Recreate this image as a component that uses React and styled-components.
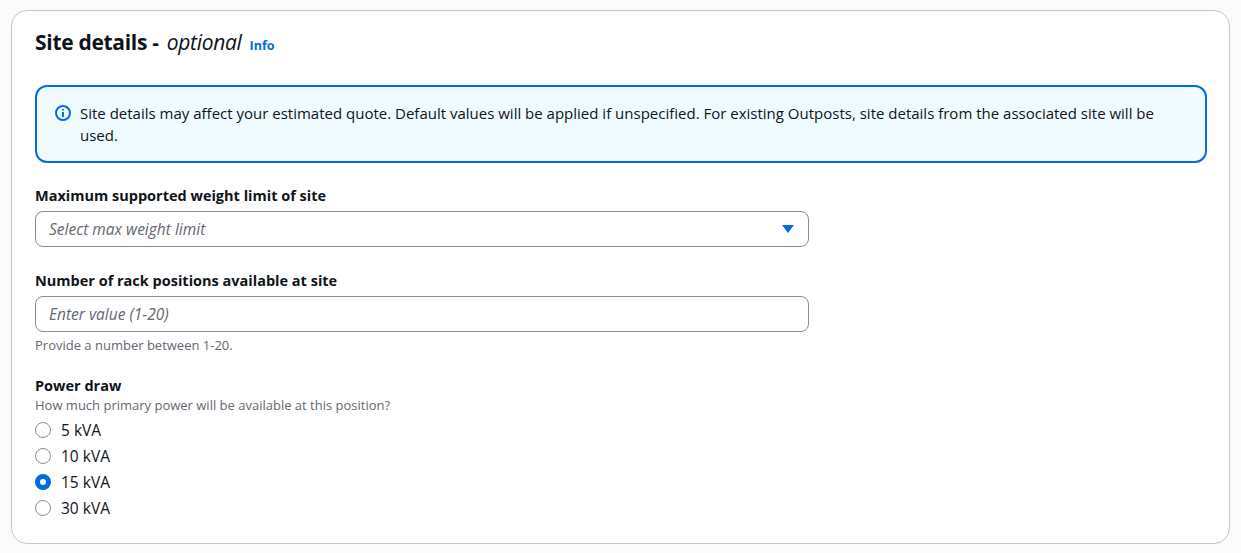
import React from "react";
import styled, { createGlobalStyle } from "styled-components";

const Global = createGlobalStyle`
  body { margin: 0; background: #fbfbfb; font-family: "Open Sans", "Noto Sans", sans-serif; color: #0f141a; }
`;
const Page = styled.div`padding: 10px 11px 11px 11px;`;
const Card = styled.section`
  background: #fff; border: 1px solid #c6c6cd; border-radius: 16px;
  padding: 24px 22px 22px 23px; display: flex; flex-direction: column;
`;
const Title = styled.h2`
  margin: 0; font-size: 21px; font-weight: 700; line-height: 14px; display: flex; align-items: baseline; gap: 8px;
  letter-spacing: -0.3px;
  em { font-weight: 500; }
`;
const Info = styled.a`font-size: 12.5px; font-weight: 700; color: #006ce0; letter-spacing: 0;`;
const Alert = styled.div`
  margin-top: 32px; border: 2px solid #006ce0; background: #f0fbff; border-radius: 12px;
  padding: 15px 44px 15px 18px; display: flex; gap: 9px; font-size: 15px; line-height: 22px;
  svg { flex: none; margin-top: 3px; }
`;
const Field = styled.div`margin-top: ${p => p.$top}px; display: flex; flex-direction: column;`;
const Label = styled.label`font-size: 14.5px; font-weight: 700; line-height: 22px;`;
const Desc = styled.div`font-size: 13px; line-height: 16px; color: #656871;`;
const Box = styled.div`
  margin-top: 4px; width: 774px; height: 36px; box-sizing: border-box; border: 1px solid #8c8c94; border-radius: 8px;
  display: flex; align-items: center; justify-content: space-between; padding: 0 14px 0 13px;
  font-size: 15.5px; font-style: italic; color: #656871;
`;
const Help = styled(Desc)`margin-top: 5px;`;
const Radios = styled.div`display: flex; flex-direction: column; margin-top: 4px;`;
const Radio = styled.div`display: flex; align-items: center; gap: 10px; height: 26px; font-size: 15.5px;`;
const Dot = styled.span`
  width: 16px; height: 16px; box-sizing: border-box; border-radius: 50%;
  border: ${p => (p.$on ? "5px solid #006ce0" : "1.5px solid #8c8c94")}; background: #fff;
`;

export default function App() {
  return (
    <Page>
      <Global />
      <Card>
        <Title>Site details - <em>optional</em><Info>Info</Info></Title>
        <Alert>
          <svg width="16" height="16" viewBox="0 0 16 16" fill="none" stroke="#006ce0" strokeWidth="2">
            <circle cx="8" cy="8" r="7" /><path d="M8 7v5M8 4v1.5" />
          </svg>
          <div>Site details may affect your estimated quote. Default values will be applied if unspecified. For existing Outposts, site details from the associated site will be used.</div>
        </Alert>
        <Field $top={22}>
          <Label>Maximum supported weight limit of site</Label>
          <Box>Select max weight limit
            <svg width="12" height="10" viewBox="0 0 12 10"><path d="M0 1h12L6 9z" fill="#006ce0" /></svg>
          </Box>
        </Field>
        <Field $top={23}>
          <Label>Number of rack positions available at site</Label>
          <Box>Enter value (1-20)</Box>
          <Help>Provide a number between 1-20.</Help>
        </Field>
        <Field $top={22}>
          <Label>Power draw</Label>
          <Desc>How much primary power will be available at this position?</Desc>
          <Radios>
            {["5 kVA", "10 kVA", "15 kVA", "30 kVA"].map(v => (
              <Radio key={v}><Dot $on={v === "15 kVA"} />{v}</Radio>
            ))}
          </Radios>
        </Field>
      </Card>
    </Page>
  );
}
